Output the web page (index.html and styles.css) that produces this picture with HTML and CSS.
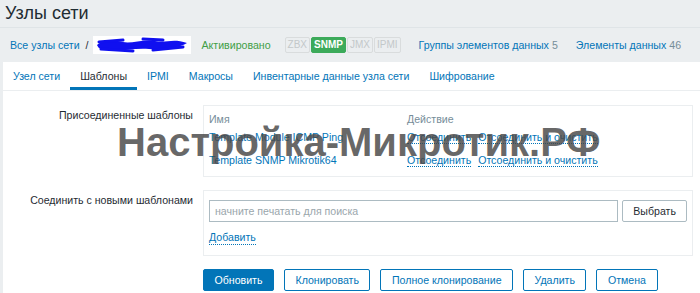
FILE: index.html
```html
<!DOCTYPE html>
<html lang="ru">
<head>
    <meta charset="UTF-8">
    <meta name="viewport" content="width=device-width, initial-scale=1.0">
    <title>Узлы сети</title>
    <link rel="stylesheet" href="styles.css">
</head>
<body>
    <header class="page-title">
        <h1>Узлы сети</h1>
    </header>

    <nav class="host-bar">
        <a href="#" class="link">Все узлы сети</a>
        <span class="crumb-sep">/</span>
        <span class="redacted">
            <svg width="98" height="18" viewBox="0 0 98 18">
                <path d="M4 9 C10 3, 22 4, 30 6 S50 3, 62 5 S80 2, 94 7 C86 12, 70 14, 56 13 S30 15, 18 14 S6 13, 4 9 Z" fill="#1010f0"/>
                <path d="M6 6 L30 4 M8 13 L40 15 M50 3 L70 4 M60 14 L90 11" stroke="#1010f0" stroke-width="3" stroke-linecap="round"/>
            </svg>
        </span>
        <span class="status-on">Активировано</span>
        <span class="avail">
            <span class="tag">ZBX</span><span class="tag tag-on">SNMP</span><span class="tag">JMX</span><span class="tag">IPMI</span>
        </span>
        <a href="#" class="link bar-link">Группы элементов данных</a><span class="count">5</span>
        <a href="#" class="link bar-link">Элементы данных</a><span class="count">46</span>
    </nav>

    <main class="panel">
        <ul class="tabs">
            <li><a href="#">Узел сети</a></li>
            <li class="active"><a href="#">Шаблоны</a></li>
            <li><a href="#">IPMI</a></li>
            <li><a href="#">Макросы</a></li>
            <li><a href="#">Инвентарные данные узла сети</a></li>
            <li><a href="#">Шифрование</a></li>
        </ul>

        <form class="form">
            <div class="form-row">
                <label class="form-label">Присоединенные шаблоны</label>
                <div class="box linked">
                    <div class="linked-row linked-head">
                        <span class="col-name">Имя</span>
                        <span class="col-action">Действие</span>
                    </div>
                    <div class="linked-row row-first">
                        <a href="#" class="col-name link">Template Module ICMP Ping</a>
                        <span class="col-action">
                            <a href="#" class="link dotted">Отсоединить</a>
                            <a href="#" class="link dotted">Отсоединить и очистить</a>
                        </span>
                    </div>
                    <div class="linked-row row-second">
                        <a href="#" class="col-name link">Template SNMP Mikrotik64</a>
                        <span class="col-action">
                            <a href="#" class="link dotted">Отсоединить</a>
                            <a href="#" class="link dotted">Отсоединить и очистить</a>
                        </span>
                    </div>
                </div>
            </div>

            <div class="form-row">
                <label class="form-label">Соединить с новыми шаблонами</label>
                <div class="box new-templates">
                    <div class="search-line">
                        <input type="text" class="search-input" placeholder="начните печатать для поиска">
                        <button type="button" class="btn btn-alt">Выбрать</button>
                    </div>
                    <a href="#" class="link dotted add-link">Добавить</a>
                </div>
            </div>

            <div class="actions">
                <button type="button" class="btn btn-main">Обновить</button>
                <button type="button" class="btn">Клонировать</button>
                <button type="button" class="btn">Полное клонирование</button>
                <button type="button" class="btn">Удалить</button>
                <button type="button" class="btn">Отмена</button>
            </div>
        </form>

        <div class="watermark">Настройка-Микротик.РФ</div>
    </main>
</body>
</html>
```

FILE: styles.css
```css
:root {
    --page-bg: #ebeef0;
    --text: #1f2c33;
    --link: #0275b8;
    --muted: #768d99;
    --line: #dfe4e7;
    --green: #429e47;
}

* {
    box-sizing: border-box;
    margin: 0;
    padding: 0;
}

body {
    font-family: "Liberation Sans", Arial, sans-serif;
    font-size: 10.6px;
    color: var(--text);
    background-color: var(--page-bg);
    overflow: hidden;
}

a {
    text-decoration: none;
}

.link {
    color: var(--link);
}

.dotted {
    border-bottom: 1px dotted var(--link);
}

.page-title {
    height: 28px;
    padding: 3px 0 0 5px;
    border-bottom: 1px solid var(--line);
}

.page-title h1 {
    font-size: 18px;
    font-weight: normal;
    line-height: 21px;
}

.host-bar {
    height: 34px;
    display: flex;
    align-items: center;
    padding-left: 10px;
    white-space: nowrap;
}

.crumb-sep {
    margin: 0 4px 0 6px;
    color: var(--text);
}

.redacted {
    display: flex;
    align-items: center;
    width: 98px;
    height: 18px;
    background-color: #fff;
}

.status-on {
    color: var(--green);
    margin-left: 11px;
}

.avail {
    display: flex;
    margin-left: 14px;
    margin-right: 17px;
}

.tag {
    font-size: 10px;
    line-height: 14px;
    padding: 0 2px;
    border: 1px solid #d9dcdd;
    color: #c3c8ca;
    margin-right: 1px;
    border-radius: 2px;
}

.tag-on {
    background-color: #3caa5a;
    border-color: #3caa5a;
    color: #fff;
    font-weight: bold;
}

.bar-link + .count {
    margin-left: 3px;
    margin-right: 18px;
    color: var(--muted);
}

.panel {
    position: relative;
    margin-left: 3px;
    height: 231px;
    background-color: #fff;
}

.tabs {
    display: flex;
    list-style: none;
    height: 29px;
    border-bottom: 1px solid var(--page-bg);
}

.tabs li {
    padding: 0 10px;
    display: flex;
    align-items: center;
    border-bottom: 3px solid transparent;
    padding-top: 2px;
}

.tabs li a {
    color: var(--link);
}

.tabs li.active {
    border-bottom-color: var(--link);
}

.tabs li.active a {
    color: var(--text);
}

.form {
    padding-top: 14px;
}

.form-row {
    display: grid;
    grid-template-columns: 190px 490px;
    column-gap: 10px;
    margin-bottom: 13px;
}

.form-label {
    text-align: right;
    padding-top: 4px;
}

.box {
    border: 1px solid #ebeef0;
    padding: 0 5px;
}

.linked {
    height: 72px;
}

.linked-row {
    display: flex;
}

.linked-head {
    height: 23px;
    align-items: center;
    padding-top: 2px;
    color: var(--muted);
}

.row-first {
    height: 15px;
    align-items: center;
}

.row-second {
    height: 25px;
    padding-top: 7px;
    align-items: center;
}

.col-name {
    width: 198px;
    flex-shrink: 0;
}

.col-action .dotted + .dotted {
    margin-left: 4px;
}

.new-templates {
    height: 66px;
    padding-top: 9px;
}

.search-line {
    display: flex;
    gap: 4px;
}

.search-input {
    width: 411px;
    height: 22px;
    border: 1px solid #acbbc2;
    padding: 0 5px;
    font-family: inherit;
    font-size: 10.6px;
    color: var(--text);
}

.search-input::placeholder {
    color: #9aa6ac;
}

.add-link {
    display: inline-block;
    margin-top: 8px;
    line-height: 14px;
}

.actions {
    display: flex;
    gap: 10px;
    padding-left: 200px;
}

.btn {
    height: 22px;
    padding: 0 10.5px;
    border: 1px solid var(--link);
    border-radius: 2px;
    background-color: #fff;
    color: var(--link);
    font-family: inherit;
    font-size: 10.6px;
    cursor: pointer;
}

.btn-main {
    background-color: var(--link);
    color: #fff;
}

.btn-alt {
    width: 65px;
    padding: 0;
    border-color: #acbbc2;
    color: var(--text);
}

.watermark {
    position: absolute;
    left: 114px;
    top: 58px;
    font-size: 40px;
    font-weight: bold;
    color: rgba(70, 70, 70, 0.82);
    white-space: nowrap;
    pointer-events: none;
}
```
